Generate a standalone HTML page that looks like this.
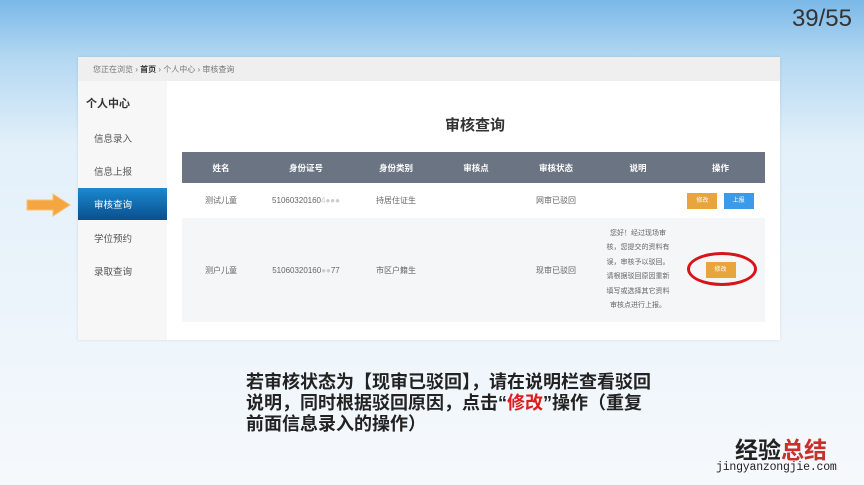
<!DOCTYPE html>
<html><head><meta charset="utf-8"><style>
*{margin:0;padding:0;box-sizing:border-box}
body{width:864px;height:485px;overflow:hidden;position:relative;font-family:"Liberation Sans","Noto Sans CJK SC",sans-serif;background:linear-gradient(180deg,#7ab8e8 0%,#b4d8f2 12%,#e3f0fa 30%,#eef5fb 70%,#f6f9fc 100%)}
.abs{position:absolute}
.panel{left:78px;top:57px;width:702px;height:283px;background:#fafafa;box-shadow:0 0 3px rgba(0,0,0,.1)}
.bc{left:78px;top:57px;width:702px;height:24px;background:#efefef;font-size:8px;color:#777;padding:7px 0 0 15px}
.side{left:78px;top:81px;width:89px;height:259px;background:#f7f7f7}
.content{left:167px;top:81px;width:613px;height:259px;background:#fff}
.si{position:absolute;left:16px;font-size:9.5px;color:#555}
table{border-collapse:collapse;font-size:8px;color:#666;text-align:center}
th{background:#6b7482;color:#fff;height:31px;font-weight:bold;font-size:8.5px}
.btn{display:inline-block;width:30px;height:16px;color:#fff;font-size:6px;line-height:16px}
</style></head><body>
<div class="abs" style="right:12px;top:5px;font-size:24px;color:#333">39/55</div>
<div class="abs panel"></div>
<div class="abs bc">您正在浏览 › <b style="color:#333">首页</b> › 个人中心 › 审核查询</div>
<div class="abs side">
<div class="si" style="left:8px;top:14px;font-size:11px;font-weight:bold;color:#333">个人中心</div>
<div class="si" style="top:50px">信息录入</div>
<div class="si" style="top:83px">信息上报</div>
<div style="position:absolute;left:0;top:107px;width:89px;height:32px;background:linear-gradient(#1a8ad0,#0a4f8e)"></div>
<div class="si" style="top:116px;color:#fff">审核查询</div>
<div class="si" style="top:150px">学位预约</div>
<div class="si" style="top:183px">录取查询</div>
</div>
<div class="abs content"></div>
<div class="abs" style="left:420px;top:114px;width:110px;text-align:center;font-size:15px;font-weight:bold;color:#333">审核查询</div>
<table class="abs" style="left:182px;top:152px;width:583px">
<tr><th style="width:78px">姓名</th><th style="width:92px">身份证号</th><th style="width:88px">身份类别</th><th style="width:72px">审核点</th><th style="width:88px">审核状态</th><th style="width:76px">说明</th><th>操作</th></tr>
<tr style="height:35px;background:#fff"><td>测试儿童</td><td>51060320160<span style="color:#ccc">4●●●</span></td><td>持居住证生</td><td></td><td>网审已驳回</td><td></td><td><span class="btn" style="background:#e8a53c">修改</span> <span class="btn" style="background:#3c9be8;margin-left:4px">上报</span></td></tr>
<tr style="height:104px;background:#f5f6f8"><td>测户儿童</td><td>51060320160<span style="color:#ccc">●●</span>77</td><td>市区户籍生</td><td></td><td>现审已驳回</td><td style="font-size:7px;line-height:14.5px;padding:0 6px">您好！经过现场审核，您提交的资料有误，审核予以驳回。请根据驳回原因重新填写或选择其它资料审核点进行上报。</td><td><span class="btn" style="background:#e8a53c">修改</span></td></tr>
</table>
<div class="abs" style="left:687px;top:252px;width:70px;height:34px;border:3px solid #d8141a;border-radius:50%"></div>
<svg class="abs" style="left:26px;top:192px" width="46" height="26"><path d="M1 8h26V2l17 11-17 11v-6H1z" fill="#f4a640" stroke="#f7c27a"/></svg>
<div class="abs" style="left:246px;top:372px;font-size:18px;line-height:21px;font-weight:bold;color:#222;white-space:nowrap">若审核状态为【现审已驳回】，请在说明栏查看驳回<br>说明，同时根据驳回原因，点击“<span style="color:#e01b1b">修改</span>”操作（重复<br>前面信息录入的操作）</div>
<div class="abs" style="left:735px;top:431px;font-size:23px;font-weight:bold;color:#222">经验<span style="color:#c9302c">总结</span></div>
<div class="abs" style="left:716px;top:461px;font-size:11.5px;color:#222;font-family:'Liberation Mono',monospace;letter-spacing:-0.2px">jingyanzongjie.com</div>
</body></html>
